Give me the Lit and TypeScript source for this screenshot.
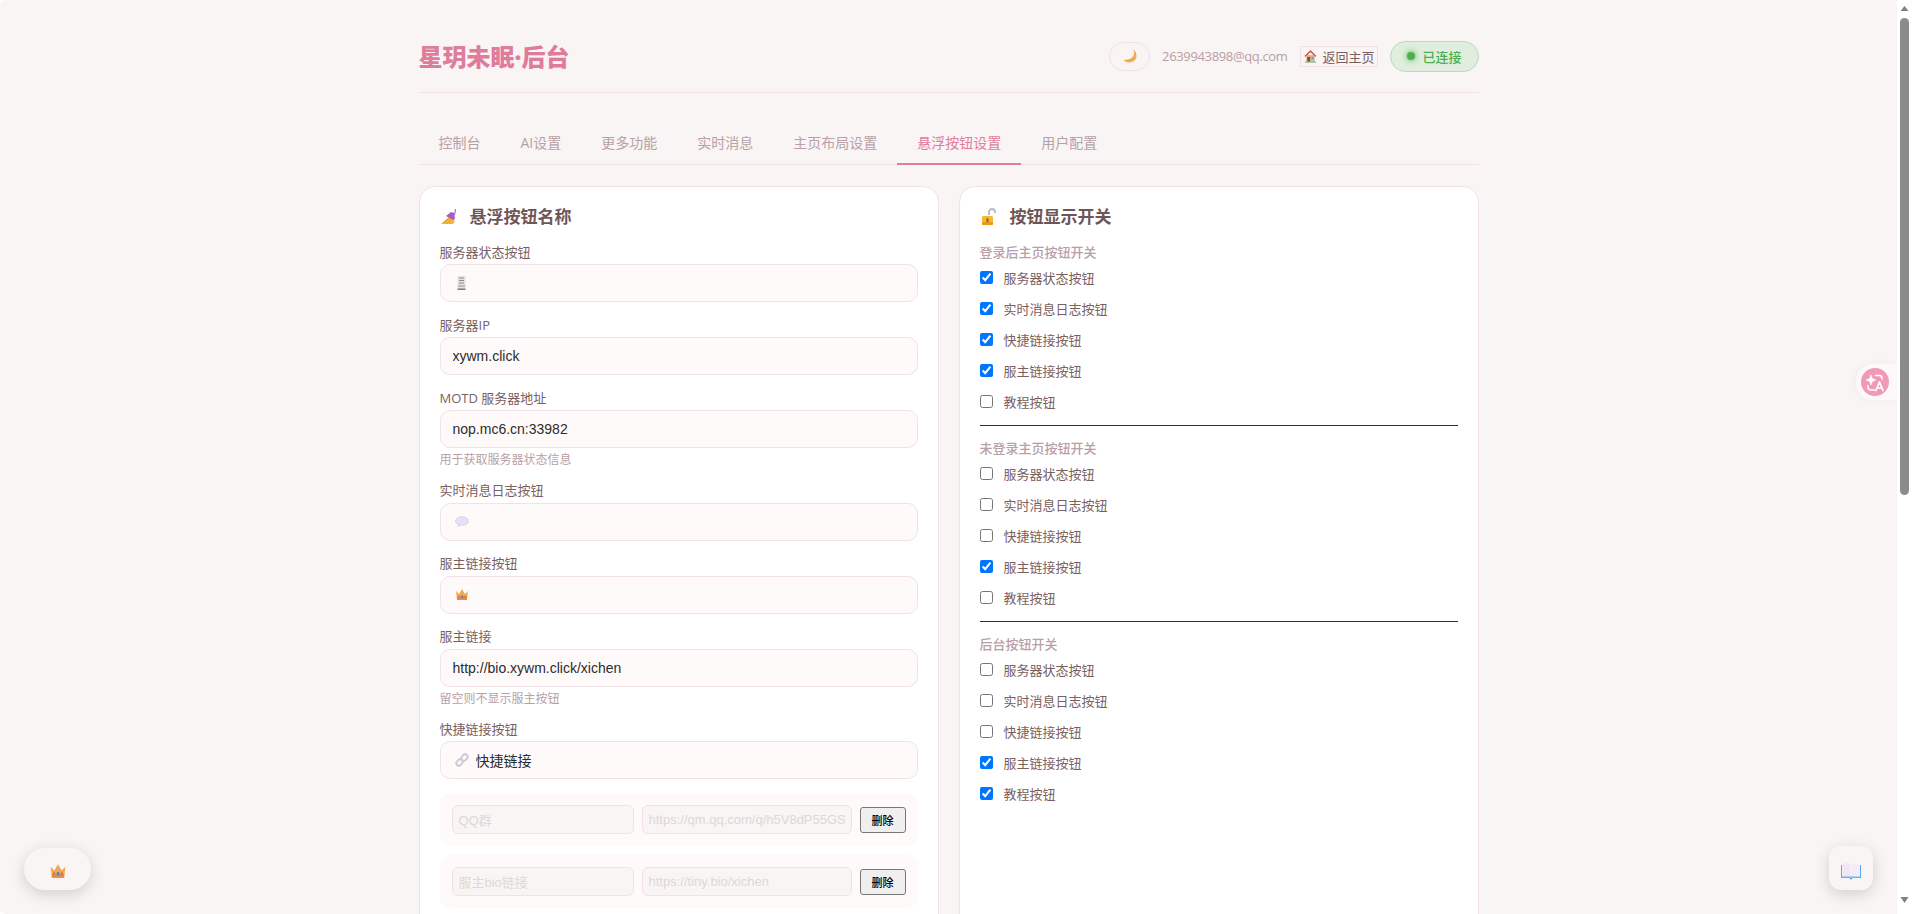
import { LitElement, html, css, svg } from "lit";
import { customElement } from "lit/decorators.js";

const icons: Record<string, unknown> = {
  server: svg`<svg width="9" height="14" viewBox="0 0 9 14"><rect x="0.500" y="0" width="8" height="12" fill="#e6e2e2"/><path d="M2 2h5M2 4.500h5M2 7h5" stroke="#8d8a8a"/><rect x="1" y="9" width="7" height="2" fill="#bbb"/><rect x="0.500" y="12.600" width="8" height="1" fill="#333"/></svg>`,
  chat: svg`<svg width="14" height="12" viewBox="0 0 14 12"><path d="M3 8l-.5 3 3.500-2z" fill="#d6cfe8"/><ellipse cx="7" cy="5" rx="6.500" ry="4.400" fill="#e6e0f4" stroke="#d2c9e8" stroke-width=".6"/></svg>`,
  crown: svg`<svg width="14" height="13" viewBox="0 0 14 13"><path d="M1 3l3 3 3-5 3 5 3-3-1 9H2z" fill="#f0a94f"/><rect x="2" y="9" width="10" height="3" fill="#e8874a"/><rect x="6" y="7.500" width="2.200" height="2.500" fill="#3f84e0"/><circle cx="3.800" cy="8.500" r=".8" fill="#d9534f"/><circle cx="10.300" cy="8.500" r=".8" fill="#d9534f"/></svg>`,
  crownBig: svg`<svg width="18" height="16" viewBox="0 0 14 13"><path d="M1 3l3 3 3-5 3 5 3-3-1 9H2z" fill="#f0a94f"/><rect x="2" y="9" width="10" height="3" fill="#e8874a"/><rect x="6" y="7.500" width="2.200" height="2.500" fill="#3f84e0"/><circle cx="3.800" cy="8.500" r=".8" fill="#d9534f"/><circle cx="10.300" cy="8.500" r=".8" fill="#d9534f"/></svg>`,
  link: svg`<svg width="14" height="14" viewBox="0 0 14 14" fill="none" stroke="#cfc8d6" stroke-width="2"><rect x="7" y="1" width="5" height="7" rx="2.500" transform="rotate(40 9.500 4.500)"/><rect x="2" y="6" width="5" height="7" rx="2.500" transform="rotate(40 4.500 9.500)"/></svg>`,
  nail: svg`<svg width="17" height="17" viewBox="0 0 17 17"><path d="M0 16l8-7 6 4-2 3z" fill="#f9b233"/><path d="M5 8l5-4 3 1 1 6-2 1z" fill="#a35fc2"/><path d="M14 1l1 .3-1 6-1-.3z" fill="#9b59b6"/><path d="M2 15l6-5M5 16l5-4" stroke="#e8a020"/></svg>`,
  lock: svg`<svg width="17" height="18" viewBox="0 0 17 18"><path d="M8 7V4a3 3 0 0 1 6 0v1" fill="none" stroke="#b8b8c0" stroke-width="1.800"/><rect x="1" y="8" width="11" height="9" rx="1.500" fill="#f5b82e"/><rect x="1" y="14" width="11" height="3" rx="1" fill="#e89a20"/><rect x="5.500" y="10.500" width="2" height="3.500" fill="#8a5a1a"/></svg>`,
  moon: svg`<svg width="14" height="14" viewBox="0 0 14 14"><path d="M10 0.500c2.500 4 1 10.500-9.500 10.500C3 14.500 13.500 15 13.500 6.500 13.500 4 12 1.500 10 0.500z" fill="#f3aa50"/></svg>`,
  home: svg`<svg width="14" height="14" viewBox="0 0 14 14"><rect x="2.500" y="6" width="9" height="7" fill="#e3b27f"/><path d="M7 0.500L.5 7l1 1L7 3l5.500 5 1-1z" fill="#d9534f"/><rect x="3.500" y="8" width="3" height="5" fill="#80503a"/><rect x="8" y="8" width="2.500" height="2.500" fill="#4aa8e8"/><rect x="1" y="13" width="12" height="1" fill="#48b07a"/></svg>`,
  book: svg`<svg width="20" height="17" viewBox="0 0 20 17"><path d="M0 2h1v12h7.500l1.500 1 1.500-1H19V2h1v13h-8.500l-1 1.500h-1l-1-1.500H0z" fill="#55aaf0"/><path d="M1.500 1C4 0 7.500 0 9.500 1.500V14C7.500 13 4 13 1.500 13.500z" fill="#efe6f6"/><path d="M10.500 1.500C12.500 0 16 0 18.500 1V13.500C16 13 12.500 13 10.500 14z" fill="#f4edf8"/><rect x="1" y="13.500" width="18" height="1.200" fill="#68b4ef"/></svg>`,
};

const groups = [
  { title: "登录后主页按钮开关", on: [1, 1, 1, 1, 0] },
  { title: "未登录主页按钮开关", on: [0, 0, 0, 1, 0] },
  { title: "后台按钮开关", on: [0, 0, 0, 1, 1] },
];
const buttonNames = ["服务器状态按钮", "实时消息日志按钮", "快捷链接按钮", "服主链接按钮", "教程按钮"];
const tabs = ["控制台", "AI设置", "更多功能", "实时消息", "主页布局设置", "悬浮按钮设置", "用户配置"];

type Field = { label: string; value?: string; icon?: string; hint?: string };
const fields: Field[] = [
  { label: "服务器状态按钮", icon: "server" },
  { label: "服务器IP", value: "xywm.click" },
  { label: "MOTD 服务器地址", value: "nop.mc6.cn:33982", hint: "用于获取服务器状态信息" },
  { label: "实时消息日志按钮", icon: "chat" },
  { label: "服主链接按钮", icon: "crown" },
  { label: "服主链接", value: "http://bio.xywm.click/xichen", hint: "留空则不显示服主按钮" },
  { label: "快捷链接按钮", icon: "link", value: "快捷链接" },
];
const linkRows = [
  ["QQ群", "https://qm.qq.com/q/h5V8dP55GS"],
  ["服主bio链接", "https://tiny.bio/xichen"],
];

@customElement("app-root")
export class AppRoot extends LitElement {
  static styles = css`
    :host {
      display: flex;
      height: 100vh;
      overflow: hidden;
      background: #fff;
      border-radius: 6px;
      font-family: "Open Sans", "Noto Sans CJK SC", sans-serif;
      color: #7a6060;
      font-size: 13px;
    }
    .scroller { flex: 1; min-width: 0; overflow-y: auto; background: #f9f5f4; scrollbar-width: none; }
    .bar { flex: none; width: 15px; display: flex; flex-direction: column; align-items: center; background: #fff; }
    .bar svg { display: block; flex: none; }
    .thumb { flex: none; width: 9px; height: 477px; border-radius: 5px; background: #8b8b8b; }
    .bar .down { margin-top: auto; margin-bottom: 5px; }
    .page { max-width: 1060px; margin: 0 auto; padding: 20px; }
    .header { display: flex; align-items: center; justify-content: space-between; height: 72px; border-bottom: 1px solid #f2e2e5; }
    .title { font-size: 24px; line-height: 36px; padding-top: 2px; font-weight: 800; color: #e07c9b; }
    .actions { display: flex; align-items: center; gap: 12px; }
    .moon { display: flex; align-items: center; justify-content: center; width: 41px; height: 29px; box-sizing: border-box; border: 1px solid #f2e2e5; border-radius: 15px; }
    .email { color: #b8a0a6; font-size: 13px; line-height: 18px; letter-spacing: -0.35px; }
    .home { display: flex; align-items: center; gap: 6px; box-sizing: border-box; height: 21px; width: 78px; padding: 0 2px 0 3px; border: 1px solid #f2e2e5; font-size: 13px; color: #7a6060; white-space: nowrap; }
    .status { display: flex; align-items: center; gap: 8px; box-sizing: border-box; width: 89px; height: 31px; padding-left: 16px; border: 1px solid #b8dcb6; border-radius: 16px; background: #dfeedd; color: #4caf50; font-size: 13px; font-weight: 500; }
    .dot { width: 8px; height: 8px; border-radius: 50%; background: #4caf50; box-shadow: 0 0 6px #4caf50; }
    .tabs { display: flex; margin-top: 29px; border-bottom: 1px solid #f2e2e5; }
    .tab { padding: 10px 20px; font-size: 14px; line-height: 21px; height: 21px; color: #b8a0a6; white-space: nowrap; margin-bottom: -1px; border-bottom: 2px solid transparent; }
    .tab.active { color: #e27c9c; border-bottom-color: #e27c9c; }
    .grid { display: grid; grid-template-columns: 1fr 1fr; gap: 20px; margin-top: 20.500px; min-height: 1480px; }
    .card { box-sizing: border-box; background: #fff; border: 1px solid #f2e2e5; border-radius: 16px; padding: 20px; }
    .card-title { display: flex; align-items: center; gap: 11px; font-size: 17px; line-height: 20px; font-weight: 600; color: #6f5656; margin-bottom: 15px; }
    .card-title .ic { display: flex; justify-content: center; width: 18px; margin-left: 1px; }
    .field { margin-bottom: 12.500px; }
    .label { display: block; line-height: 20px; margin-bottom: 2.500px; font-size: 13px; color: #7a6060; }
    .box { display: flex; align-items: center; gap: 7px; box-sizing: border-box; height: 38px; padding: 0 12px; border: 1px solid #f2e2e5; border-radius: 10px; background: #fffafa; }
    .box .glyph { display: flex; justify-content: center; width: 14px; margin-left: 2px; }
    .box input { flex: 1; min-width: 0; border: 0; outline: 0; padding: 0; background: transparent; font: 14px "Liberation Sans", "Noto Sans CJK SC", sans-serif; color: #2c2c2c; }
    .hint { margin-top: 4px; font-size: 12px; line-height: 15.500px; color: #b8a0a6; }
    .rows { margin-top: 14px; }
    .link-row { display: grid; grid-template-columns: 182fr 210fr auto; gap: 8px; align-items: center; padding: 12px; border-radius: 10px; background: #fffafa; margin-bottom: 9px; }
    .link-row input { box-sizing: border-box; width: 100%; height: 29px; padding: 0 6px; border: 1px solid #f2e2e5; border-radius: 6px; background: #f8f5f4; color: #dcd8d8; font: 13px "Liberation Sans", "Noto Sans CJK SC", sans-serif; }
    .link-row button { box-sizing: border-box; height: 26px; width: 46px; padding: 0; border: 1px solid #767676; border-radius: 3px; background: #efefef; color: #000; font: 500 11px "Noto Sans CJK SC", sans-serif; }
    .section { font-size: 13px; line-height: 20px; font-weight: 500; color: #b8a0a6; margin-bottom: 7px; }
    .check { display: flex; align-items: flex-start; gap: 11px; height: 20px; margin-bottom: 11px; line-height: 19px; font-size: 13px; color: #7a6060; }
    .check.last { margin-bottom: 0; }
    .check input { width: 13px; height: 13px; margin: 2px 0 0; }
    .rule { height: 1px; border-top: 1px solid #2f2f45; margin: 12px 0 11px; }
    .lang { position: fixed; top: 364px; right: 15px; display: flex; align-items: center; box-sizing: border-box; width: 41px; height: 36px; padding-left: 5px; background: #fdf9fb; border-radius: 18px 0 0 18px; box-shadow: -2px 0 8px rgba(0,0,0,.04); }
    .lang-circle { display: flex; align-items: center; justify-content: center; width: 28px; height: 28px; border-radius: 50%; background: #ef9bb7; }
    .float { position: fixed; display: flex; align-items: center; justify-content: center; box-sizing: border-box; background: #f9f5f4; box-shadow: 0 4px 15px rgba(0,0,0,.16); }
    .float.crown { left: 24px; top: 848px; width: 67px; height: 42px; padding-top: 4px; border-radius: 21px; }
    .float.book { right: 39px; top: 846px; width: 44px; height: 44px; padding-top: 6px; border-radius: 12px; }
  `;

  render() {
    return html`
      <div class="scroller">
        <div class="page">
          <header class="header">
            <div class="title">星玥未眠·后台</div>
            <div class="actions">
              <div class="moon">${icons.moon}</div>
              <div class="email">2639943898@qq.com</div>
              <div class="home">${icons.home}<span>返回主页</span></div>
              <div class="status"><span class="dot"></span>已连接</div>
            </div>
          </header>
          <nav class="tabs">
            ${tabs.map((t) => html`<div class="tab ${t === "悬浮按钮设置" ? "active" : ""}">${t}</div>`)}
          </nav>
          <div class="grid">
            <section class="card">
              <div class="card-title"><span class="ic">${icons.nail}</span>悬浮按钮名称</div>
              ${fields.map(
                (f) => html`<div class="field">
                  <label class="label">${f.label}</label>
                  <div class="box">
                    ${f.icon ? html`<span class="glyph">${icons[f.icon]}</span>` : ""}
                    <input type="text" .value=${f.value ?? ""} />
                  </div>
                  ${f.hint ? html`<div class="hint">${f.hint}</div>` : ""}
                </div>`
              )}
              <div class="rows">
                ${linkRows.map(
                  ([a, b]) => html`<div class="link-row">
                    <input disabled .value=${a} />
                    <input disabled .value=${b} />
                    <button>删除</button>
                  </div>`
                )}
              </div>
            </section>
            <section class="card">
              <div class="card-title"><span class="ic">${icons.lock}</span>按钮显示开关</div>
              ${groups.map(
                (g, i) => html`
                  ${i ? html`<div class="rule"></div>` : ""}
                  <div class="section">${g.title}</div>
                  ${buttonNames.map(
                    (n, k) => html`<label class="check ${k === buttonNames.length - 1 ? "last" : ""}"><input type="checkbox" .checked=${!!g.on[k]} /><span>${n}</span></label>`
                  )}
                `
              )}
            </section>
          </div>
        </div>
      </div>
      <div class="bar">
        <svg width="15" height="18" viewBox="0 0 15 18"><path d="M7.500 6l4 5h-8z" fill="#808080"/></svg>
        <div class="thumb"></div>
        <svg class="down" width="15" height="12" viewBox="0 0 15 12"><path d="M3.500 0h8l-4 6z" fill="#808080"/></svg>
      </div>
      <div class="lang">
        <div class="lang-circle">
          <svg width="20" height="20" viewBox="0 0 20 20" fill="none" stroke="#fff" stroke-width="1.500" stroke-linecap="round" stroke-linejoin="round">
            <path d="M6 3l1.400 3.600 3.600 1.400-3.600 1.400L6 13l-1.400-3.600L1 8l3.600-1.400z" fill="#fff" stroke-width=".5"/>
            <path d="M10.500 3.500H14a3 3 0 0 1 3 3v.5"/>
            <path d="M3 13.500V15a3 3 0 0 0 3 3h3.500"/>
            <path d="M11 18.500l3.500-8.500 3.500 8.500M12.200 16h4.600" stroke-width="1.700"/>
          </svg>
        </div>
      </div>
      <div class="float crown">${icons.crownBig}</div>
      <div class="float book">${icons.book}</div>
    `;
  }
}
